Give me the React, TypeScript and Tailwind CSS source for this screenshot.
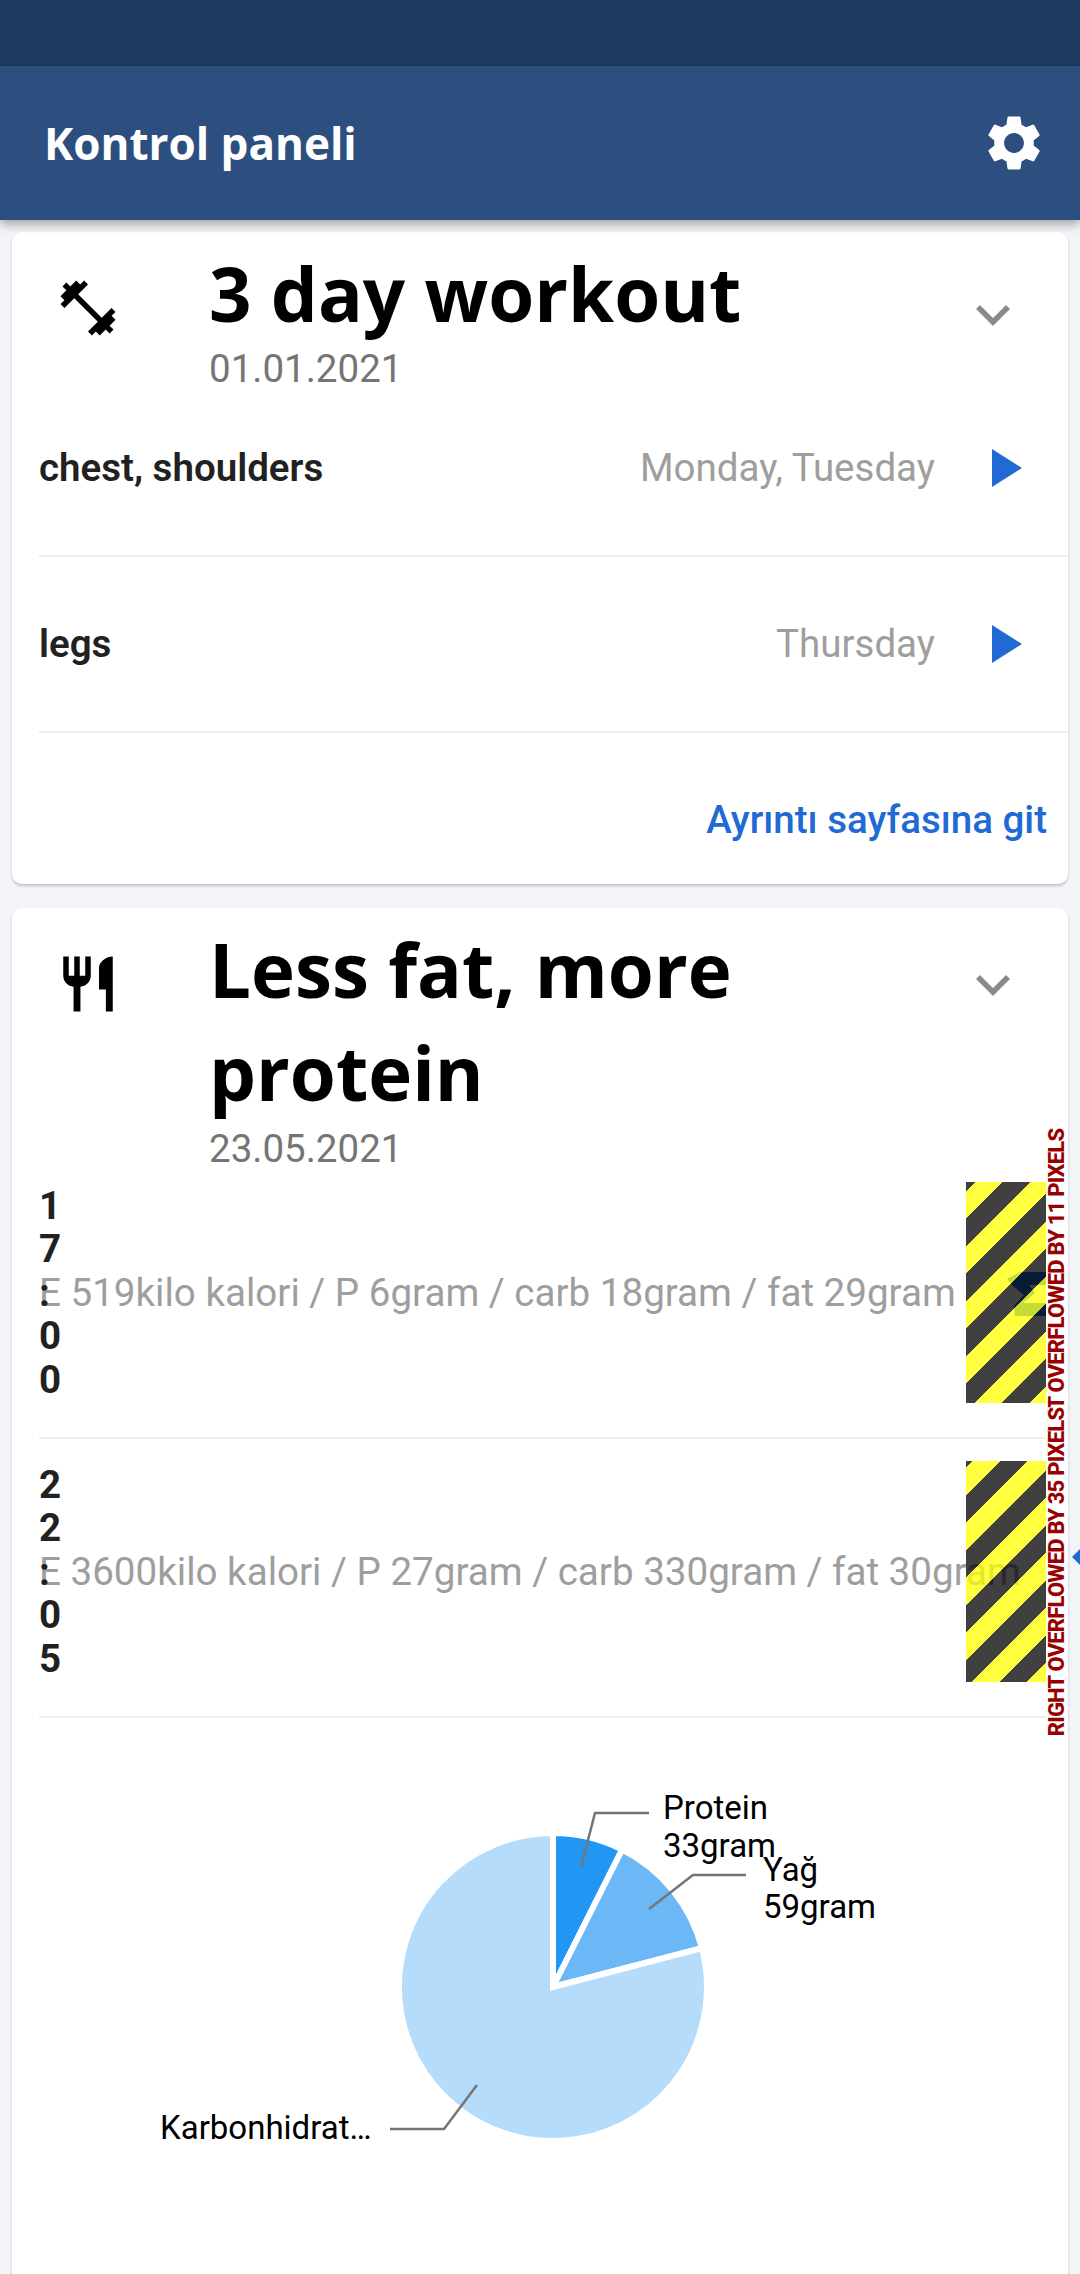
import React from "react";

const roboto = "font-['Roboto',sans-serif]";
const openSans = "font-['Open_Sans',sans-serif]";

const Gear = () => (
  <svg width="66" height="66" viewBox="0 0 24 24" fill="#fff">
    <path d="M19.14 12.94c.04-.3.06-.61.06-.94 0-.32-.02-.64-.07-.94l2.03-1.58c.18-.14.23-.41.12-.61l-1.92-3.32c-.12-.22-.37-.29-.59-.22l-2.39.96c-.5-.38-1.03-.7-1.62-.94l-.36-2.54c-.04-.24-.24-.41-.48-.41h-3.84c-.24 0-.43.17-.47.41l-.36 2.54c-.59.24-1.13.57-1.62.94l-2.39-.96c-.22-.08-.47 0-.59.22L2.74 8.87c-.12.21-.08.47.12.61l2.03 1.58c-.05.3-.07.62-.07.94s.02.64.07.94l-2.03 1.58c-.18.14-.23.41-.12.61l1.92 3.32c.12.22.37.29.59.22l2.39-.96c.5.38 1.03.7 1.62.94l.36 2.54c.05.24.24.41.48.41h3.84c.24 0 .44-.17.47-.41l.36-2.54c.59-.24 1.13-.56 1.62-.94l2.39.96c.22.08.47 0 .59-.22l1.92-3.32c.12-.22.07-.47-.12-.61l-2.01-1.58zM12 15.6c-1.98 0-3.6-1.62-3.6-3.6s1.62-3.6 3.6-3.6 3.6 1.62 3.6 3.6-1.62 3.6-3.6 3.6z" />
  </svg>
);

const Barbell = () => (
  <svg width="66" height="66" viewBox="0 0 24 24" fill="#000">
    <path d="M20.57 14.86L22 13.43 20.57 12 17 15.57 8.43 7 12 3.43 10.57 2 9.14 3.43 7.71 2 5.57 4.14 4.14 2.71 2.71 4.14l1.43 1.43L2 7.71l1.43 1.43L2 10.57 3.43 12 7 8.43 15.57 17 12 20.57 13.43 22l1.43-1.43L16.29 22l2.14-2.14 1.43 1.43 1.43-1.43-1.43-1.43L22 16.29z" />
  </svg>
);

const Dining = () => (
  <svg width="66" height="66" viewBox="0 0 24 24" fill="#000">
    <path d="M11 9H9V2H7v7H5V2H3v7c0 2.12 1.66 3.84 3.75 3.97V22h2.5v-9.03C11.34 12.84 13 11.12 13 9V2h-2v7zm5-3v8h2.5v8H21V2c-2.76 0-5 2.24-5 4z" />
  </svg>
);

const Chevron = () => (
  <svg width="34" height="22" viewBox="0 0 34 22" fill="none" stroke="#8a8a8a" strokeWidth="5.5">
    <path d="M2 3l15 15L32 3" />
  </svg>
);

const Play = () => (
  <svg width="30" height="38" viewBox="0 0 30 38" fill="#2169d3">
    <path d="M0 0l30 19L0 38z" />
  </svg>
);

type HeadProps = { icon: React.ReactNode; title: React.ReactNode; date: string; chevronPad: string; dateLine: string };

const CardHead = ({ icon, title, date, chevronPad, dateLine }: HeadProps) => (
  <div className="flex">
    <div className="w-[197px] shrink-0 pl-[43px] pt-[43px]">{icon}</div>
    <div className="flex-1 min-w-0 pt-[10px]">
      <div className={`${openSans} font-bold text-[74.4px] leading-[103px] text-black`}>{title}</div>
      <div className={`${roboto} text-[38.5px] text-[#757575] ${dateLine}`}>{date}</div>
    </div>
    <div className={`w-[92px] shrink-0 ${chevronPad}`}>
      <Chevron />
    </div>
  </div>
);

const workouts = [
  { name: "chest, shoulders", days: "Monday, Tuesday" },
  { name: "legs", days: "Thursday" },
];

const stripesA =
  "bg-[repeating-linear-gradient(135deg,rgba(0,0,0,0.75)_0px,rgba(0,0,0,0.75)_6.4px,rgba(255,255,0,0.75)_6.4px,rgba(255,255,0,0.75)_25.85px,rgba(0,0,0,0.75)_25.85px,rgba(0,0,0,0.75)_38.9px)]";
const stripesB =
  "bg-[repeating-linear-gradient(135deg,rgba(0,0,0,0.75)_0px,rgba(0,0,0,0.75)_4.6px,rgba(255,255,0,0.75)_4.6px,rgba(255,255,0,0.75)_24.05px,rgba(0,0,0,0.75)_24.05px,rgba(0,0,0,0.75)_38.9px)]";

const meals = [
  {
    time: "17:00",
    macro: "E 519kilo kalori / P 6gram / carb 18gram / fat 29gram",
    stripes: stripesA,
    label: "RIGHT OVERFLOWED BY 11 PIXELS",
    pad: "pt-[8px] pb-[34px]",
  },
  {
    time: "22:05",
    macro: "E 3600kilo kalori / P 27gram / carb 330gram / fat 30gram",
    stripes: stripesB,
    label: "RIGHT OVERFLOWED BY 35 PIXELS",
    pad: "pt-[22px] pb-[34px]",
  },
];

const MealRow = ({ meal, index }: { meal: (typeof meals)[number]; index: number }) => (
  <div className={`${meal.pad} ml-[27px] mr-[22px] border-b-2 border-[#eeeeee]`}>
    <div className="relative flex items-center h-[221px]">
      <div className={`${roboto} relative z-10 w-0 font-bold text-[38.5px] leading-[43.5px] text-[#212121]`}>
        {meal.time.split("").map((c, i) => (
          <div key={i}>{c}</div>
        ))}
      </div>
      <div className={`${roboto} whitespace-nowrap text-[38.6px] text-[#9e9e9e]`}>{meal.macro}</div>
      {index === 0 ? (
        <svg className="absolute left-[968px] top-[90px]" width="39" height="44" viewBox="0 0 39 44" fill="#1f6bd6">
          <path d="M0 7l13-7h26v13H22l6 8-12 10h23v13H8l-1-10 10-11L6 14z" />
        </svg>
      ) : (
        <svg className="absolute left-[1033px] top-[88px]" width="8" height="16" viewBox="0 0 8 16" fill="#2169d3">
          <path d="M8 0L0 8l8 8z" />
        </svg>
      )}
      <div className={`absolute right-0 top-0 h-full w-[80px] ${meal.stripes}`} />
      <div
        className={`${roboto} absolute right-[-20px] top-1/2 -translate-y-1/2 rotate-180 [writing-mode:vertical-rl] whitespace-nowrap bg-white font-extrabold text-[22px] leading-[18px] tracking-[-0.8px] text-[#990000]`}
      >
        {meal.label}
      </div>
    </div>
  </div>
);

const MacroPie = () => (
  <svg className="block" width="1056" height="541" viewBox="12 1716 1056 541">
    <g stroke="#fff" strokeWidth="6">
      <path d="M553 1985V1831A154 154 0 0 1 622.2 1847.5z" fill="#2196f3" />
      <path d="M553 1985L622.2 1847.5A154 154 0 0 1 702 1946.2z" fill="#6cb8f6" />
      <path d="M553 1985L702 1946.2A154 154 0 1 1 553 1831z" fill="#b5dcfb" />
    </g>
    <g fill="none" stroke="#757575" strokeWidth="2.5">
      <path d="M581 1865L595 1811H649" />
      <path d="M649 1907L693 1873H746" />
      <path d="M477 2083L444 2127H390" />
    </g>
    <g className={roboto} fontSize="33" fill="#000">
      <text x="663" y="1817">Protein</text>
      <text x="663" y="1855">33gram</text>
      <text x="763" y="1879">Yağ</text>
      <text x="763" y="1916">59gram</text>
      <text x="160" y="2137">Karbonhidrat…</text>
    </g>
  </svg>
);

export default function App() {
  return (
    <div className="h-[2274px] overflow-hidden bg-[#f3f4f7]">
      <div className="h-[66px] bg-[#1f3a60]" />
      <header className="relative z-10 flex h-[154px] items-center justify-between bg-[#2c4f7f] pl-[44px] pr-[33px] shadow-[0_4px_10px_rgba(0,0,0,0.35)]">
        <h1 className={`${openSans} text-[44px] font-bold text-white`}>Kontrol paneli</h1>
        <Gear />
      </header>

      <div className="flex flex-col gap-[24px] px-[12px] pt-[12px]">
        <section className="h-[652px] rounded-[10px] bg-white shadow-[0_2px_3px_rgba(0,0,0,0.2)]">
          <CardHead
            icon={<Barbell />}
            title="3 day workout"
            date="01.01.2021"
            chevronPad="pt-[72px]"
            dateLine="leading-[48px]"
          />
          <div className={`${roboto} -mt-[12px]`}>
            {workouts.map((w) => (
              <div key={w.name} className="ml-[27px] flex h-[176px] items-center border-b-2 border-[#eeeeee]">
                <span className="flex-1 text-[38.5px] font-semibold text-[#212121]">{w.name}</span>
                <span className="text-[38.5px] text-[#9e9e9e]">{w.days}</span>
                <span className="ml-[57px] mr-[46px] flex">
                  <Play />
                </span>
              </div>
            ))}
            <div className="flex justify-end pr-[21px] pt-[65px] text-[38.5px] font-medium leading-[44px] text-[#2169d3]">
              Ayrıntı sayfasına git
            </div>
          </div>
        </section>

        <section className="h-[1400px] rounded-[10px] bg-white shadow-[0_2px_3px_rgba(0,0,0,0.2)]">
          <CardHead
            icon={<Dining />}
            title={
              <>
                Less fat, more
                <br />
                protein
              </>
            }
            date="23.05.2021"
            chevronPad="pt-[66px]"
            dateLine="leading-[50px]"
          />
          {meals.map((m, i) => (
            <MealRow key={m.time} meal={m} index={i} />
          ))}
          <MacroPie />
        </section>
      </div>
    </div>
  );
}
